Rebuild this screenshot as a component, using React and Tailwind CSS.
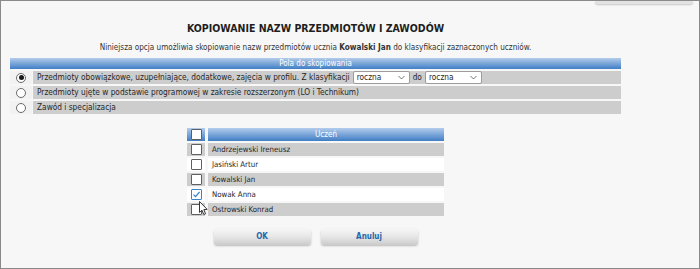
import React from "react";

const students = [
  { name: "Andrzejewski Ireneusz", checked: false },
  { name: "Jasiński Artur", checked: false },
  { name: "Kowalski Jan", checked: false },
  { name: "Nowak Anna", checked: true },
  { name: "Ostrowski Konrad", checked: false },
];

const fields = [
  "Przedmioty obowiązkowe, uzupełniające, dodatkowe, zajęcia w profilu. Z klasyfikacji",
  "Przedmioty ujęte w podstawie programowej w zakresie rozszerzonym (LO i Technikum)",
  "Zawód i specjalizacja",
];

function Radio({ checked }) {
  return (
    <span className="w-[10px] h-[10px] rounded-full border border-[#6b6b6b] bg-white flex items-center justify-center">
      {checked && <span className="w-[5px] h-[5px] rounded-full bg-[#1a1a1a]" />}
    </span>
  );
}

function Checkbox({ checked }) {
  return (
    <span
      className={
        checked
          ? "w-[11px] h-[11px] border border-[#3b84c4] bg-white rounded-[1px] flex items-center justify-center"
          : "w-[11px] h-[11px] border border-[#5f5f5f] bg-white rounded-[1px]"
      }
    >
      {checked && (
        <svg width="9" height="9" viewBox="0 0 9 9">
          <path d="M1.5 4.6 L3.6 6.7 L7.6 1.8" fill="none" stroke="#2f7fcf" strokeWidth="1.2" />
        </svg>
      )}
    </span>
  );
}

function FakeSelect() {
  return (
    <div className="w-[57px] h-[13px] bg-white border border-[#9c9c9c] rounded-[2px] flex items-center justify-between pl-[3px] pr-[4px]">
      <span>roczna</span>
      <svg width="7" height="5" viewBox="0 0 7 5">
        <path d="M0.5 1 L3.5 4 L6.5 1" fill="none" stroke="#666" strokeWidth="0.9" />
      </svg>
    </div>
  );
}

export default function App() {
  return (
    <div className="w-[700px] h-[269px] bg-[#f7f7f7] border border-[#8a8a8a] relative overflow-hidden text-[#262626] font-['DejaVu_Sans_Condensed','DejaVu_Sans',sans-serif] text-[8px]">
      {/* tab remnant at the top right */}
      <div className="absolute top-0 right-[6px] w-[98px] h-[3px] rounded-b-[3px] bg-[#e2e2e2] shadow-[0_1px_2px_rgba(0,0,0,0.2)]" />

      <div className="w-[611px] ml-[9px]">
        <div className="mt-[20px] h-[14px] leading-[14px] text-center font-bold text-[10.5px] text-[#1e1e1e]">
          KOPIOWANIE NAZW PRZEDMIOTÓW I ZAWODÓW
        </div>
        <div className="mt-[6px] h-[12px] leading-[12px] text-center text-[#333] text-[8.1px]">
          Niniejsza opcja umożliwia skopiowanie nazw przedmiotów ucznia <b>Kowalski Jan</b> do klasyfikacji zaznaczonych uczniów.
        </div>

        {/* Pola do skopiowania */}
        <div className="mt-[5px] h-[11px] leading-[11px] text-center text-white bg-gradient-to-b from-[#b3cceb] to-[#3f7ec4]">
          Pola do skopiowania
        </div>
        <div className="mt-[2px] flex flex-col gap-[2px] text-[8.25px]">
          {fields.map((f, i) => (
            <div key={i} className="flex h-[13px] gap-[1px]">
              <div className="w-[22px] flex items-center justify-center bg-[#f2f2f2]">
                <Radio checked={i === 0} />
              </div>
              <div className="flex-1 bg-[#cdcdcd] flex items-center pl-[4px] gap-[3px]">
                <span>{f}</span>
                {i === 0 && (
                  <>
                    <FakeSelect />
                    <span>do</span>
                    <FakeSelect />
                  </>
                )}
              </div>
            </div>
          ))}
        </div>

        {/* Uczniowie */}
        <div className="w-[257px] mx-auto mt-[14px]">
          <div className="flex h-[13px] gap-[3px]">
            <div className="w-[18px] flex items-center justify-center bg-gradient-to-b from-[#b3cceb] to-[#3f7ec4]">
              <Checkbox />
            </div>
            <div className="flex-1 text-center leading-[13px] text-white bg-gradient-to-b from-[#b3cceb] to-[#3f7ec4]">
              Uczeń
            </div>
          </div>
          <div className="mt-[2px] flex flex-col gap-[2px] text-[7.8px]">
            {students.map((s, i) => (
              <div key={s.name} className="relative flex h-[13px] gap-[3px]">
                <div
                  className={
                    i % 2 === 0
                      ? "w-[18px] flex items-center justify-center bg-[#cdcdcd]"
                      : "w-[18px] flex items-center justify-center bg-white"
                  }
                >
                  <Checkbox checked={s.checked} />
                </div>
                <div
                  className={
                    i % 2 === 0
                      ? "flex-1 leading-[13px] pl-[4px] bg-[#cdcdcd]"
                      : "flex-1 leading-[13px] pl-[4px] bg-white"
                  }
                >
                  {s.name}
                </div>
                {s.checked && (
                  <svg
                    className="absolute z-10 left-[12px] top-[13px]"
                    width="10"
                    height="15"
                    viewBox="0 0 10 15"
                  >
                    <path
                      d="M0.5 0.5 L0.5 11.5 L3 9.2 L4.8 13.5 L6.6 12.8 L4.8 8.6 L8.2 8.4 Z"
                      fill="white"
                      stroke="#222"
                      strokeWidth="0.9"
                      strokeLinejoin="round"
                    />
                  </svg>
                )}
              </div>
            ))}
          </div>

          <div className="mt-[13px] flex justify-center gap-[10px]">
            {["OK", "Anuluj"].map((b) => (
              <button
                key={b}
                className="w-[97px] h-[16px] rounded-[3px] font-bold text-[#2467ad] bg-gradient-to-b from-[#f6f6f6] via-[#e6e6e6] to-[#cbcbcb] shadow-[0_1px_2px_rgba(0,0,0,0.25)]"
              >
                {b}
              </button>
            ))}
          </div>
        </div>
      </div>
    </div>
  );
}
